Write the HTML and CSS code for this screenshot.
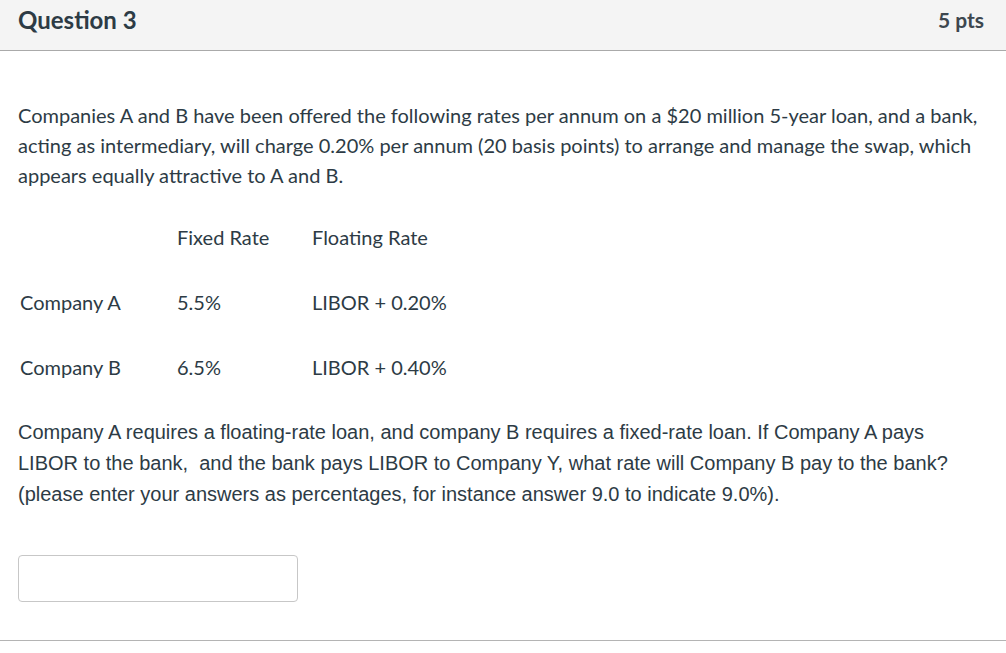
FILE: index.html
```html
<!DOCTYPE html>
<html>
<head>
<meta charset="utf-8">
<link rel="stylesheet" href="styles.css">
</head>
<body>
<div class="question">
  <div class="q-header">
    <span class="q-title">Question 3</span>
    <span class="q-pts">5 pts</span>
  </div>
  <div class="q-body">
    <p class="intro">Companies A and B have been offered the following rates per annum on a $20 million 5-year loan, and a bank, acting as intermediary, will charge 0.20% per annum (20 basis points) to arrange and manage the swap, which appears equally attractive to A and B.</p>
    <table class="rates">
      <tr><td class="c1"></td><td class="c2">Fixed Rate</td><td class="c3">Floating Rate</td></tr>
      <tr><td class="c1">Company A</td><td class="c2">5.5%</td><td class="c3">LIBOR + 0.20%</td></tr>
      <tr><td class="c1">Company B</td><td class="c2">6.5%</td><td class="c3">LIBOR + 0.40%</td></tr>
    </table>
    <p class="task">Company A requires a floating-rate loan, and company B requires a fixed-rate loan. If Company A pays LIBOR to the bank,&nbsp; and the bank pays LIBOR to Company Y, what rate will Company B pay to the bank? (please enter your answers as percentages, for instance answer 9.0 to indicate 9.0%).</p>
    <input class="answer" type="text">
  </div>
</div>
</body>
</html>
```
FILE: styles.css
```css
html, body {
  margin: 0;
  padding: 0;
  background: #fff;
}
body {
  font-family: Lato, "Liberation Sans", sans-serif;
  color: #2d3b45;
}
.question {
  width: 1006px;
  border-bottom: 1px solid #b4b4b4;
}
.q-header {
  height: 51px;
  box-sizing: border-box;
  background: #f4f4f4;
  border-bottom: 1px solid #aaaaaa;
  display: flex;
  justify-content: space-between;
  align-items: flex-start;
  padding: 4px 22px 0 18px;
  font-weight: 700;
}
.q-title {
  font-size: 24px;
  line-height: 32px;
}
.q-pts {
  font-size: 21px;
  line-height: 32px;
  color: #3d474f;
}
.q-body {
  padding: 49px 18px 38px 18px;
}
.intro {
  margin: 0;
  font-size: 20px;
  line-height: 30px;
}
.rates {
  border-collapse: collapse;
  margin-top: 14px;
  font-size: 20px;
}
.rates td {
  height: 65px;
  padding: 0 0 0 2px;
  vertical-align: middle;
}
.rates .c1 { width: 155px; }
.rates .c2 { width: 133px; }
.rates .c3 { width: 200px; }
.task {
  margin: 18px 0 0 0;
  font-family: "Liberation Sans", Arial, sans-serif;
  font-size: 20px;
  line-height: 31px;
  color: #2d3b45;
}
.answer {
  display: block;
  margin-top: 45px;
  width: 280px;
  height: 47px;
  box-sizing: border-box;
  border: 1px solid #c7c7c7;
  border-radius: 4px;
  background: #fff;
  padding: 0 8px;
}
```
